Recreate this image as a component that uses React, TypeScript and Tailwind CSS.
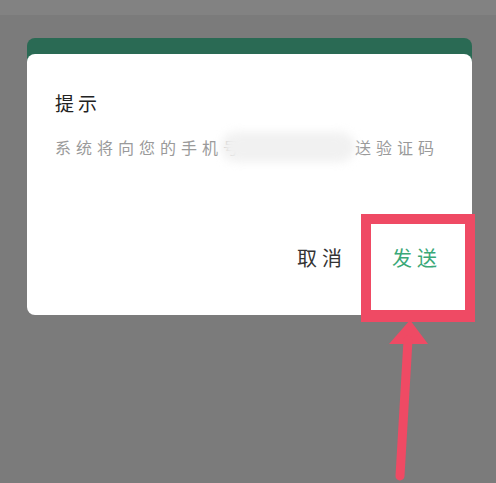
export default function App() {
  return (
    <div className="relative h-[483px] w-[496px] overflow-hidden bg-[#7b7b7b] font-['Noto_Sans_CJK_SC',sans-serif]">
      <div className="h-[15px] bg-[#828282]" />
      <div className="ml-[27px] mt-[23px] w-[445px]">
        <div className="h-[24px] rounded-t-[8px] bg-[#2a6a54]" />
        <div className="-mt-[8px] h-[261px] rounded-[8px] bg-white px-[28px] pt-[36px]">
          <div className="text-[19px] leading-[26px] tracking-[4px] text-[#222]">提示</div>
          <div className="relative mt-[20px] text-[16px] leading-[22px] tracking-[5px] text-[#9a9a9a] whitespace-nowrap">
            系统将向您的手机号<span className="inline-block w-[111px]" />送验证码
            <span className="absolute left-[166px] top-[-4px] h-[30px] w-[134px] rounded-full bg-[#f1f1f1] blur-[5px]" />
          </div>
          <div className="mt-[87px] flex justify-end gap-[45px] pr-[2px] text-[20px] leading-[26px] tracking-[5px]">
            <span className="text-[#333]">取消</span>
            <span className="text-[#3aa878]">发送</span>
          </div>
        </div>
      </div>
      <div className="absolute left-[361px] top-[214px] h-[108px] w-[114px] border-[10px] border-b-[12px] border-[#ef4a64]" />
      <svg className="absolute left-0 top-0" width="496" height="483" viewBox="0 0 496 483">
        <polygon points="410,320 389,344 428,344" fill="#ef4a64" />
        <line x1="408" y1="340" x2="400" y2="476" stroke="#ef4a64" strokeWidth="9" strokeLinecap="round" />
      </svg>
    </div>
  );
}
